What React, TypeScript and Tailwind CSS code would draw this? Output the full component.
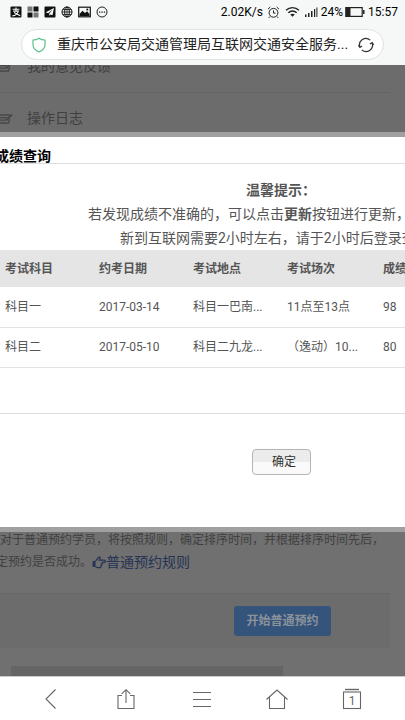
import type { ReactNode } from "react";

interface ExamResult { subject: string; date: string; place: string; session: string; score: string; }

const columns = ["考试科目", "约考日期", "考试地点", "考试场次", "成绩"];

const results: ExamResult[] = [
  { subject: "科目一", date: "2017-03-14", place: "科目一巴南...", session: "11点至13点", score: "98" },
  { subject: "科目二", date: "2017-05-10", place: "科目二九龙...", session: "（逸动）10...", score: "80" },
];

const menuItems = ["我的意见反馈", "操作日志"];

function StatusBar() {
  return (
    <div className="flex h-6 items-center justify-between pl-[10px] pr-[7px] text-black">
      <div className="flex items-center gap-[5px]">
        <svg width="12" height="12" viewBox="0 0 12 12">
          <rect x="0.5" y="0.5" width="11" height="11" rx="1" fill="#111" />
          <path d="M2.6 3.2h6.8M6 1.6v3.4M3.2 5.1h5.2C7.6 7.2 5.6 9.6 2.4 9.9M4 6.4C6 7.2 8 8.6 10.2 9.8" fill="none" stroke="#f5f8f7" strokeWidth="1.1" />
        </svg>
        <svg width="12" height="12" viewBox="0 0 12 12">
          <rect x="0.5" y="0.5" width="5" height="5" fill="#777" />
          <rect x="6.5" y="0.5" width="5" height="5" fill="#111" />
          <rect x="0.5" y="6.5" width="5" height="5" fill="#111" />
          <rect x="6.5" y="6.5" width="5" height="5" fill="#777" />
        </svg>
        <svg width="12" height="12" viewBox="0 0 12 12">
          <rect x="0.5" y="0.5" width="11" height="11" rx="1" fill="#111" />
          <path d="M10 2L1.8 6.3l2.4 1L8.6 3.6L5.2 7.8v2l1.3-1.4l2 .9z" fill="#f5f8f7" />
        </svg>
        <svg width="12" height="12" viewBox="0 0 12 12" fill="none" stroke="#111" strokeWidth="1">
          <circle cx="6" cy="6" r="5" />
          <ellipse cx="6" cy="6" rx="2.3" ry="5" />
          <path d="M6 1v10M1 6h10M1.8 3.5h8.4M1.8 8.5h8.4" strokeWidth="0.8" />
        </svg>
        <svg width="13" height="12" viewBox="0 0 13 12">
          <rect x="0.7" y="1.2" width="11.6" height="9.6" fill="none" stroke="#111" strokeWidth="1.2" />
          <path d="M1.5 10V8l3-3.2L7 7l2-1.7L11.5 8v2z" fill="#111" />
          <circle cx="9.3" cy="3.6" r="1" fill="#111" />
        </svg>
        <svg width="12" height="12" viewBox="0 0 12 12">
          <circle cx="6" cy="6" r="5" fill="none" stroke="#222" />
          <path d="M3 5.5h1.3v1.2H3zM5.4 5.5h1.3v1.2H5.4zM7.8 5.5h1.3v1.2H7.8z" fill="#222" />
        </svg>
      </div>
      <div className="flex items-center text-[12px]">
        <span>2.02K/s</span>
        <svg className="ml-1" width="13" height="13" viewBox="0 0 13 13" fill="none" stroke="#222" strokeWidth="1">
          <circle cx="6.5" cy="6.8" r="4.4" />
          <path d="M6.5 4.4v2.7h2M1 3.2L3.3 1M12 3.2L9.7 1M3 10.5l-1.2 1.4M10 10.5l1.2 1.4" />
        </svg>
        <svg className="ml-[5px]" width="15" height="12" viewBox="0 0 15 12" fill="none" stroke="#222" strokeWidth="1.3">
          <path d="M1 4.3C4.6 0.7 10.4 0.7 14 4.3M3.3 6.7C5.7 4.4 9.3 4.4 11.7 6.7" />
          <path d="M5.2 8.6C6.5 7.4 8.5 7.4 9.8 8.6L7.5 10.8z" fill="#222" stroke="none" />
        </svg>
        <svg className="ml-1" width="14" height="12" viewBox="0 0 14 12" fill="#222">
          <path d="M1 8.5h1.5V11H1zM4 7h1.5v4H4zM7 5h1.5v6H7zM10 3h1.2v8H10zM12.4 1.5h1V11h-1z" />
        </svg>
        <span className="ml-[3px]">24%</span>
        <svg className="ml-[2px]" width="20" height="12" viewBox="0 0 20 12">
          <rect x="0.8" y="1.6" width="16.4" height="8.8" fill="none" stroke="#222" strokeWidth="1.2" />
          <path d="M1 2h4.5v8H1zM18 4h1.5v4H18z" fill="#222" />
        </svg>
        <span className="ml-[3px]">15:57</span>
      </div>
    </div>
  );
}

function AddressBar() {
  return (
    <div className="mx-[21px] mt-[5px] flex h-[31px] items-center rounded-full border border-[#dfe2e1] bg-white pl-[9px] pr-[9px]">
      <svg className="shrink-0" width="16" height="16" viewBox="0 0 16 16" fill="none" stroke="#58c287" strokeWidth="1.2">
        <path d="M8 1.2C6.3 2.5 4.2 3 2 3v4.6C2 11 4.4 13.6 8 15c3.6-1.4 6-4 6-7.4V3C11.8 3 9.7 2.5 8 1.2z" />
      </svg>
      <button type="button" className="ml-[10px] flex-1 truncate text-left text-[14px] text-[#222]">
        重庆市公安局交通管理局互联网交通安全服务...
      </button>
      <button type="button" aria-label="刷新" className="shrink-0">
        <svg width="16" height="16" viewBox="0 0 16 16" fill="none" stroke="#333" strokeWidth="1.2">
          <path d="M1.9 10A6.4 6.4 0 0 1 12.2 3.1M14.1 6A6.4 6.4 0 0 1 3.8 12.9" />
          <path d="M0.4 8.2L1.9 10.4L4.1 9M15.6 7.8L14.1 5.6L11.9 7" />
        </svg>
      </button>
    </div>
  );
}

function NoteIcon() {
  return (
    <svg className="shrink-0" width="13" height="14" viewBox="0 0 13 14" fill="none" stroke="#474747" strokeWidth="1.3">
      <path d="M0 3h9.5M0 5.6h7M0 8.2h6M0 11h8.5l1.2-4" />
      <path d="M6.2 8.2L12 2.4" strokeWidth="2" />
    </svg>
  );
}

function PageBehind() {
  return (
    <div className="flex h-full flex-col justify-between bg-[#707070] text-[#404040]">
      <ul className="-mt-6 bg-[#6c6c6c]">
        {menuItems.map((label) => (
          <li key={label} className="mr-[15px] flex h-[52px] items-center gap-[14px] border-b border-[#656565] text-[14px]">
            <NoteIcon />
            {label}
          </li>
        ))}
      </ul>
      <section>
        <p className="whitespace-nowrap text-[12px] leading-[22px]">
          对于普通预约学员，将按照规则，确定排序时间，并根据排序时间先后，
        </p>
        <div className="-ml-1 flex h-[22px] items-center text-[12px]">
          <span>定预约是否成功。</span>
          <a href="#rules" className="flex items-center text-[14px] text-[#263354]">
            <svg width="14" height="13" viewBox="0 0 14 13" fill="none" stroke="#263354" strokeWidth="1.2">
              <path d="M3.5 5L6.8 1.2C7.6 0.6 8.6 1.4 8 2.6L7.2 4.2h5c1.6 0 1.6 2.2 0 2.2H9.8c1 .4.8 1.9-.3 1.9c.6.5.3 1.7-.6 1.8c.3 1-.3 1.6-1.3 1.6H5.7L3.5 10.8" />
              <path d="M0.6 5h2.9v6H0.6z" fill="#263354" stroke="none" />
            </svg>
            普通预约规则
          </a>
        </div>
        <div className="mr-[15px] mt-5 flex h-[55px] justify-end border-t border-[#656565] bg-[#6c6c6c] pr-[59px] pt-3">
          <button type="button" className="h-[30px] w-[97px] rounded-[3px] bg-[#34547c] text-[12px] font-bold text-[#8b9299]">
            开始普通预约
          </button>
        </div>
        <div className="ml-[11px] mr-[122px] mt-[18px] h-[10px] bg-[#656565]" />
      </section>
    </div>
  );
}

function ResultDialog() {
  return (
    <div
      role="dialog"
      aria-labelledby="dialog-title"
      className="absolute -left-4 top-[67px] w-[594px] border-y-[5px] border-[#a0a0a0] bg-white text-[#555]"
    >
      <h2 id="dialog-title" className="flex h-[27px] items-end border-b border-[#ddd] pl-[11px] text-[14px] leading-[14px] font-bold text-black">
        成绩查询
      </h2>
      <div className="whitespace-nowrap pt-[14px] text-[14px] leading-[24px]">
        <p className="text-center font-bold">温馨提示：</p>
        <p className="pl-[104px]">
          若发现成绩不准确的，可以点击<b>更新</b>按钮进行更新，
        </p>
        <p className="pl-[136px]">新到互联网需要2小时左右，请于2小时后登录查</p>
      </div>
      <table className="w-full table-fixed text-left text-[12px]">
        <thead>
          <tr className="h-[37px] bg-[#e5e5e5]">
            {columns.map((name) => (
              <th key={name} className="w-[94px] pl-[5px] font-bold first:w-[110px] first:pl-[21px] last:w-auto last:pl-[7px]">{name}</th>
            ))}
          </tr>
        </thead>
        <tbody>
          {results.map((r) => (
            <tr key={r.subject} className="h-10 border-b border-[#e2e2e2]">
              <td className="pl-[21px]">{r.subject}</td>
              <td className="pl-[5px]">{r.date}</td>
              <td className="pl-[5px]">{r.place}</td>
              <td className="pl-[5px]">{r.session}</td>
              <td className="pl-[7px]">{r.score}</td>
            </tr>
          ))}
        </tbody>
      </table>
      <div className="mt-[45px] flex h-[114px] justify-center border-t border-[#ddd] pt-[35px]">
        <button
          type="button"
          className="h-[26px] w-[59px] rounded-[4px] border border-[#b4b4b4] bg-linear-to-b from-[#ececec] from-50% to-[#fafafa] to-50% pl-[6px] text-[12px] text-[#333]"
        >
          确定
        </button>
      </div>
    </div>
  );
}

function NavButton({ label, children }: { label: string; children: ReactNode }) {
  return (
    <button type="button" aria-label={label} className="flex flex-1 items-center justify-center">
      {children}
    </button>
  );
}

function BrowserNav() {
  return (
    <nav className="flex h-11 shrink-0 border-t border-[#ccc] bg-white pl-[13px] pr-[15px]">
      <NavButton label="后退">
        <svg width="22" height="22" viewBox="0 0 22 22" fill="none" stroke="#666" strokeWidth="1.1">
          <path d="M15.5 1.5L6 11l9.5 9.5" />
        </svg>
      </NavButton>
      <NavButton label="分享">
        <svg width="22" height="22" viewBox="0 0 22 22" fill="none" stroke="#666" strokeWidth="1.1">
          <path d="M7 7.5H3v13h16v-13h-4M11 15V2M6.7 5.8L11 1.7l4.3 4.1" />
        </svg>
      </NavButton>
      <NavButton label="菜单">
        <svg width="22" height="22" viewBox="0 0 22 22" fill="none" stroke="#666" strokeWidth="1">
          <path d="M2 4.5h18M2 11.5h18M2 18.5h18" />
        </svg>
      </NavButton>
      <NavButton label="主页">
        <svg width="22" height="22" viewBox="0 0 22 22" fill="none" stroke="#666" strokeWidth="1.1">
          <path d="M0.5 11.5L11 2l10.5 9.5M3.5 9v11.5h15V9" />
        </svg>
      </NavButton>
      <NavButton label="标签页">
        <svg width="22" height="22" viewBox="0 0 22 22" fill="none" stroke="#666" strokeWidth="1.1">
          <path d="M4 1.5h14" strokeWidth="1.4" />
          <rect x="2.5" y="4" width="17" height="16.5" />
          <text x="11" y="16.5" textAnchor="middle" fontSize="12" fill="#666" stroke="none">1</text>
        </svg>
      </NavButton>
    </nav>
  );
}

export default function App() {
  return (
    <div className="flex h-screen flex-col overflow-hidden font-[Roboto,'Noto_Sans_CJK_SC',sans-serif]">
      <header className="h-[65px] shrink-0 bg-[#f5f8f7]">
        <StatusBar />
        <AddressBar />
      </header>
      <main className="relative min-h-0 flex-1 overflow-hidden">
        <PageBehind />
        <ResultDialog />
      </main>
      <BrowserNav />
    </div>
  );
}
